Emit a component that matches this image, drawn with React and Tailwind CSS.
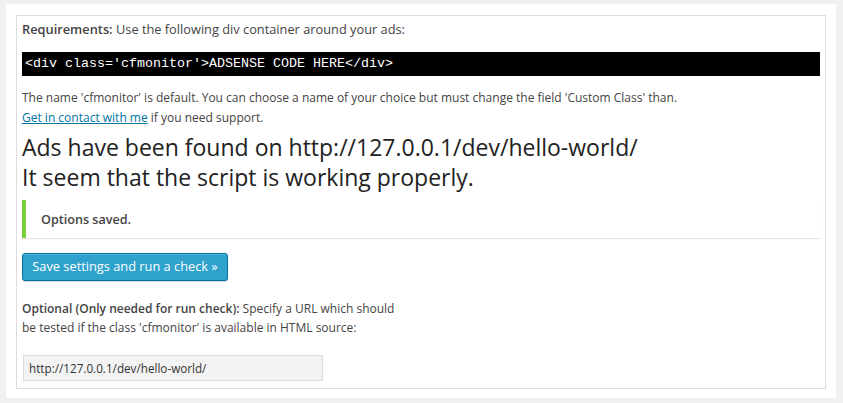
export default function App() {
  return (
    <div className="h-[403px] w-[843px] bg-[#f1f1f1] pl-[6px] pt-[4px] font-['Open_Sans',sans-serif] text-[13px] text-[#444]">
      <div className="h-[394px] w-[830px] bg-white pl-[10px] pt-[11px]">
        <div className="h-[374px] w-[810px] border border-[#dddddd] pl-[5px] pr-[4px] pt-[4px]">
          <p className="text-[12.8px] leading-[18px]">
            <strong className="font-semibold">Requirements:</strong> Use the following div container around your ads:
          </p>

          <div className="mt-[14px] flex h-[24px] w-[798px] items-center bg-black pl-[3px] font-['Liberation_Mono',monospace] text-[13.33px] text-white">
            {"<div class='cfmonitor'>ADSENSE CODE HERE</div>"}
          </div>

          <p className="mt-[12px] text-[12px] leading-[19.5px]">
            The name 'cfmonitor' is default. You can choose a name of your choice but must change the field 'Custom Class' than.
            <br />
            <a href="#" className="text-[#0074a2] underline">Get in contact with me</a> if you need support.
          </p>

          <h2 className="mt-[5px] text-[23px] leading-[30px] text-[#222]">
            Ads have been found on http://127.0.0.1/dev/hello-world/
            <br />
            It seem that the script is working properly.
          </h2>

          <div className="mt-[8px] flex h-[38px] w-[798px] items-center border-l-4 border-[#7ad03a] bg-white pl-[15px] shadow-[0_1px_1px_0_rgba(0,0,0,0.1)]">
            <p className="text-[12.6px] font-semibold leading-[19px]">Options saved.</p>
          </div>

          <button className="mt-[15px] flex h-[28px] w-[206px] items-center justify-center rounded-[3px] border border-[#0074a2] bg-[#2ea2cc] text-[12.8px] text-white shadow-[inset_0_1px_0_rgba(120,200,230,0.5),0_1px_0_rgba(0,0,0,0.15)]">
            Save settings and run a check »
          </button>

          <p className="mt-[18px] text-[12px] leading-[19px]">
            <strong className="font-semibold">Optional (Only needed for run check):</strong> Specify a URL which should
            <br />
            be tested if the class 'cfmonitor' is available in HTML source:
          </p>

          <input
            type="text"
            defaultValue="http://127.0.0.1/dev/hello-world/"
            className="ml-px mt-[18px] h-[26px] w-[300px] border border-[#dddddd] bg-[#f3f3f3] px-[5px] text-[11.7px] text-[#333] outline-none"
          />
        </div>
      </div>
    </div>
  );
}
